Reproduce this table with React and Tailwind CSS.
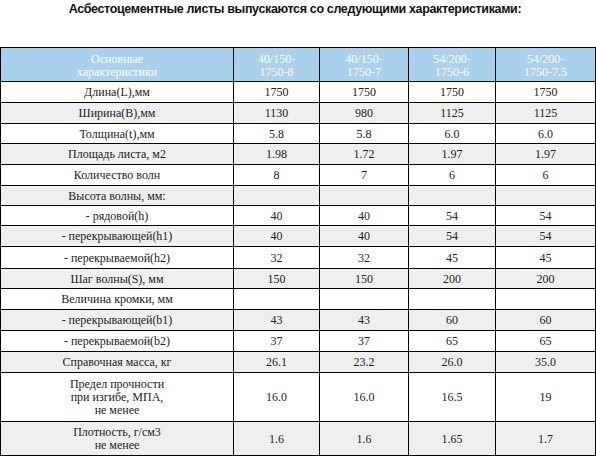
import React from 'react';

const rows = [
  { label: 'Длина(L),мм', v: ['1750', '1750', '1750', '1750'], h: 'h-[21px]', bg: 'bg-[#fffef8]' },
  { label: 'Ширина(B),мм', v: ['1130', '980', '1125', '1125'], h: 'h-[21px]', bg: 'bg-[#efefef]' },
  { label: 'Толщина(t),мм', v: ['5.8', '5.8', '6.0', '6.0'], h: 'h-[20px]', bg: 'bg-white' },
  { label: 'Площадь листа, м2', v: ['1.98', '1.72', '1.97', '1.97'], h: 'h-[21px]', bg: 'bg-[#efefef]' },
  { label: 'Количество волн', v: ['8', '7', '6', '6'], h: 'h-[21px]', bg: 'bg-white' },
  { label: 'Высота волны, мм:', v: ['', '', '', ''], h: 'h-[20px]', bg: 'bg-[#efefef]' },
  { label: '- рядовой(h)', v: ['40', '40', '54', '54'], h: 'h-[20px]', bg: 'bg-white' },
  { label: '- перекрывающей(h1)', v: ['40', '40', '54', '54'], h: 'h-[21px]', bg: 'bg-[#efefef]' },
  { label: '- перекрываемой(h2)', v: ['32', '32', '45', '45'], h: 'h-[22px]', bg: 'bg-white' },
  { label: 'Шаг волны(S), мм', v: ['150', '150', '200', '200'], h: 'h-[20px]', bg: 'bg-[#efefef]' },
  { label: 'Величина кромки, мм', v: ['', '', '', ''], h: 'h-[21px]', bg: 'bg-white' },
  { label: '- перекрывающей(b1)', v: ['43', '43', '60', '60'], h: 'h-[21px]', bg: 'bg-[#efefef]' },
  { label: '- перекрываемой(b2)', v: ['37', '37', '65', '65'], h: 'h-[21px]', bg: 'bg-white' },
  { label: 'Справочная масса, кг', v: ['26.1', '23.2', '26.0', '35.0'], h: 'h-[21px]', bg: 'bg-[#efefef]' },
];

const heads = [
  ['40/150-', '1750-8'],
  ['40/150-', '1750-7'],
  ['54/200-', '1750-6'],
  ['54/200-', '1750-7.5'],
];

export default function App() {
  return (
    <div className="w-[596px] h-[456px] bg-white overflow-hidden">
      <div className="h-[47px] pt-[1px] pr-[6px] text-center">
        <h1 className="text-[12.5px] font-bold tracking-[-0.35px] leading-[16px] text-[#111] font-['Liberation_Sans',Arial,sans-serif]">
          Асбестоцементные листы выпускаются со следующими характеристиками:
        </h1>
      </div>

      <table className="table-fixed border-collapse w-[595px] text-[12px] leading-[14px] text-[#222] font-['Liberation_Serif','Times_New_Roman',serif]">
        <colgroup>
          <col className="w-[233px]" />
          <col className="w-[86px]" />
          <col className="w-[89px]" />
          <col className="w-[87px]" />
          <col className="w-[100px]" />
        </colgroup>
        <thead>
          <tr className="h-[34px] bg-[#a9d1ec] text-white">
            <th className="border border-black font-normal text-center leading-[13px] pt-[2px]">
              Основные<br />характеристики
            </th>
            {heads.map((h, i) => (
              <th key={i} className="border border-black font-normal text-center leading-[13px] pt-[2px]">
                {h[0]}<br />{h[1]}
              </th>
            ))}
          </tr>
        </thead>
        <tbody>
          {rows.map((r, i) => (
            <tr key={i} className={`${r.h} ${r.bg}`}>
              <td className="border border-black text-center p-0">{r.label}</td>
              {r.v.map((v, j) => (
                <td key={j} className="border border-black text-center p-0">{v}</td>
              ))}
            </tr>
          ))}
          <tr className="h-[49px] bg-white">
            <td className="border border-black text-center p-0 leading-[13px]">
              Предел прочности<br />при изгибе, МПА,<br />не менее
            </td>
            {['16.0', '16.0', '16.5', '19'].map((v, j) => (
              <td key={j} className="border border-black text-center p-0">{v}</td>
            ))}
          </tr>
          <tr className="h-[34px] bg-[#efefef]">
            <td className="border border-black text-center p-0 leading-[13px]">
              Плотность, г/см3<br />не менее
            </td>
            {['1.6', '1.6', '1.65', '1.7'].map((v, j) => (
              <td key={j} className="border border-black text-center p-0">{v}</td>
            ))}
          </tr>
        </tbody>
      </table>
    </div>
  );
}
